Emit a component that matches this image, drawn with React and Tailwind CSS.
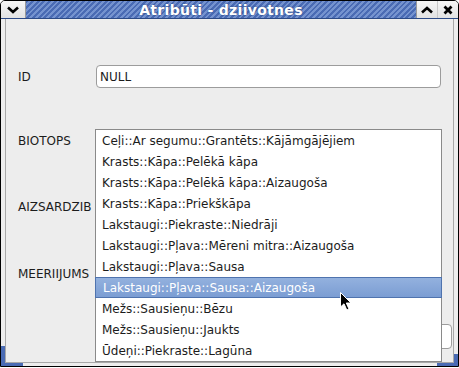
import React from "react";

const items = [
  "Ceļi::Ar segumu::Grantēts::Kājāmgājējiem",
  "Krasts::Kāpa::Pelēkā kāpa",
  "Krasts::Kāpa::Pelēkā kāpa::Aizaugoša",
  "Krasts::Kāpa::Priekškāpa",
  "Lakstaugi::Piekraste::Niedrāji",
  "Lakstaugi::Pļava::Mēreni mitra::Aizaugoša",
  "Lakstaugi::Pļava::Sausa",
  "Lakstaugi::Pļava::Sausa::Aizaugoša",
  "Mežs::Sausieņu::Bēzu",
  "Mežs::Sausieņu::Jaukts",
  "Ūdeņi::Piekraste::Lagūna",
];

const font = { fontFamily: '"DejaVu Sans", Verdana, sans-serif' };

export default function App() {
  return (
    <div className="w-[459px] h-[368px] bg-white" style={font}>
      <div className="relative w-[459px] h-[367px] border border-black rounded-t-[5px] bg-[#ededed] flex flex-col overflow-hidden">
        {/* title bar */}
        <div className="flex h-[18px] border-b border-[#2c4a86]">
          <div className="w-[25px] bg-[linear-gradient(#f6f6f6,#e2e2e2)] border-r border-[#9a9a9a] flex items-center justify-center">
            <svg width="12" height="8" viewBox="0 0 12 8">
              <path d="M1 1.5 L6 6 L11 1.5" fill="none" stroke="#000" strokeWidth="2.6" />
            </svg>
          </div>
          <div className="flex-1 flex items-center justify-center bg-[repeating-linear-gradient(135deg,#4a6bb4_0px,#4a6bb4_2px,#7593cf_2px,#7593cf_4px)]">
            <span className="text-white font-bold text-[14px] leading-none tracking-[0.3px] [text-shadow:0_0_2px_#24407a]">
              Atribūti - dziivotnes
            </span>
          </div>
          <div className="w-[21px] bg-[linear-gradient(#f6f6f6,#e2e2e2)] border-l border-[#9a9a9a] flex items-center justify-center">
            <svg width="12" height="8" viewBox="0 0 12 8">
              <path d="M1 6.5 L6 2 L11 6.5" fill="none" stroke="#000" strokeWidth="2.6" />
            </svg>
          </div>
          <div className="w-[21px] bg-[linear-gradient(#f6f6f6,#e2e2e2)] border-l border-[#c8c8c8] flex items-center justify-center">
            <svg width="10" height="10" viewBox="0 0 10 10">
              <path d="M1.5 1.5 L8.5 8.5 M8.5 1.5 L1.5 8.5" stroke="#000" strokeWidth="2.8" />
            </svg>
          </div>
        </div>

        {/* body */}
        <div className="flex-1 px-[4px] pb-[3px] flex">
          <div className="relative flex-1 border-l border-r border-b border-[#a8a8a8] text-[12px] text-[#1c1c1c]">
            <div className="flex items-center h-[23px] mt-[46px]">
              <span className="w-[90px] pl-[12px]">ID</span>
              <div className="w-[345px] h-[23px] bg-white border border-[#9c9c9c] rounded-[4px] flex items-center pl-[3px]">
                NULL
              </div>
            </div>
            <div className="flex items-center h-[20px] mt-[43px]">
              <span className="w-[90px] pl-[12px]">BIOTOPS</span>
            </div>
            <div className="flex items-center h-[20px] mt-[46px]">
              <span className="w-[90px] pl-[12px]">AIZSARDZIB</span>
            </div>
            <div className="flex items-center h-[20px] mt-[47px]">
              <span className="w-[90px] pl-[12px]">MEERIIJUMS</span>
            </div>
            <div className="ml-[90px] mt-[40px] w-[356px] h-[25px] bg-white border border-[#9c9c9c] rounded-[4px]" />

            {/* dropdown popup */}
            <div className="absolute left-[89px] top-[110px] w-[347px] h-[233px] bg-white border border-[#8a8a8a]">
              {items.map((t, i) =>
                i === 7 ? (
                  <div
                    key={t}
                    className="h-[21px] flex items-center text-white bg-[linear-gradient(#93b1de,#7b9dd3)] border border-[#4f73ae] -mx-[1px] pl-[7px]"
                  >
                    {t}
                  </div>
                ) : (
                  <div key={t} className="h-[21px] flex items-center pl-[6px]">
                    {t}
                  </div>
                )
              )}
            </div>

            {/* mouse pointer */}
            <svg className="absolute left-[334px] top-[273px]" width="14" height="20" viewBox="0 0 14 20">
              <path d="M0.5 0.5 L0.5 15 L4 11.8 L6.8 18 L9 17 L6.3 11 L11 11 Z" fill="#000" stroke="#fff" strokeWidth="1" />
            </svg>
          </div>
        </div>

        {/* resize corner highlights */}
        <div className="absolute left-0 bottom-0 w-[4px] h-[20px] bg-[#4a6bb4]" />
        <div className="absolute left-0 bottom-0 w-[22px] h-[3px] bg-[#4a6bb4]" />
        <div className="absolute right-0 bottom-0 w-[4px] h-[12px] bg-[#4a6bb4]" />
        <div className="absolute right-0 bottom-0 w-[21px] h-[3px] bg-[#4a6bb4]" />
      </div>
    </div>
  );
}
